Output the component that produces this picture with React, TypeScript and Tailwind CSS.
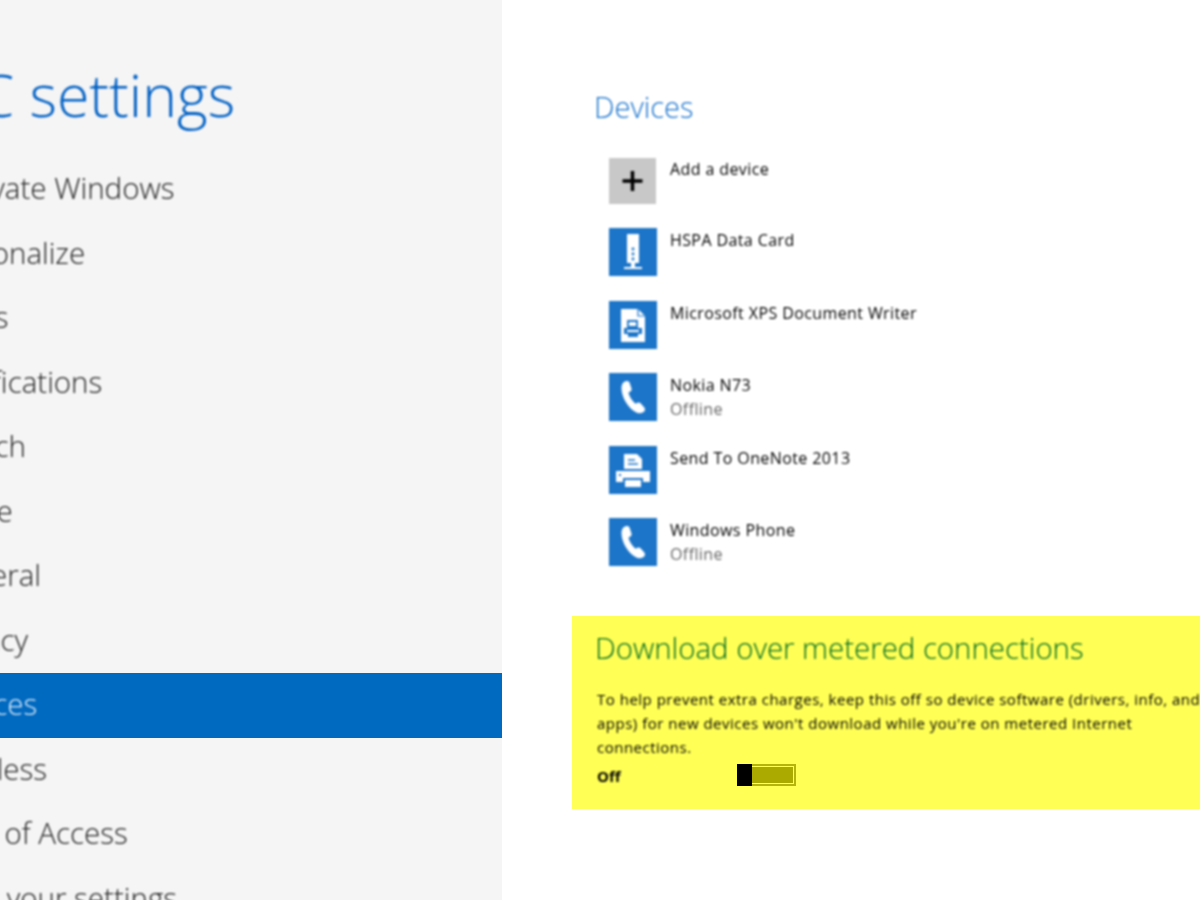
const font = { fontFamily: '"Open Sans", "Noto Sans", sans-serif' };

const nav = [
  { label: "Activate Windows", offset: "-ml-[57px]" },
  { label: "Personalize", offset: "-ml-[67px]" },
  { label: "Users", offset: "-ml-[68px]" },
  { label: "Notifications", offset: "-ml-[63px]" },
  { label: "Search", offset: "-ml-[65px]" },
  { label: "Share", offset: "-ml-[64px]" },
  { label: "General", offset: "-ml-[64px]" },
  { label: "Privacy", offset: "-ml-[64px]" },
  { label: "Devices", offset: "-ml-[64px]" },
  { label: "Wireless", offset: "-ml-[64px]" },
  { label: "Ease of Access", offset: "-ml-[65px]" },
  { label: "Sync your settings", offset: "-ml-[62px]" },
];

function Hspa() {
  return (
    <svg viewBox="0 0 48 48" className="h-12 w-12">
      <rect x="18" y="6" width="12" height="29" fill="#fff" />
      <circle cx="24" cy="21" r="1.4" fill="#1c75c8" />
      <circle cx="24" cy="26" r="1.4" fill="#1c75c8" />
      <circle cx="24" cy="31" r="1.4" fill="#1c75c8" />
      <rect x="22" y="35" width="4" height="4" fill="#fff" />
      <rect x="15" y="39" width="18" height="2" fill="#fff" />
    </svg>
  );
}

function Xps() {
  return (
    <svg viewBox="0 0 48 48" className="h-12 w-12">
      <path d="M12 8h17l7 7v26H12z" fill="#fff" />
      <path d="M29 8v7h7" fill="none" stroke="#1c75c8" strokeWidth="1.2" />
      <path d="M19 20h9v6h-9z" fill="none" stroke="#1c75c8" strokeWidth="1.8" />
      <path d="M15 27h18v6H15z" fill="#1c75c8" />
      <path d="M19 33h10v3H19z" fill="#1c75c8" />
      <path d="M18 29h12v2H18z" fill="#fff" />
    </svg>
  );
}

function Phone() {
  return (
    <svg viewBox="0 0 48 48" className="h-12 w-12">
      <path
        d="M15 9c2-1.500 4.500-1.500 5.500.5l2 6c.4 1.500-.3 2.500-1.600 3.300l-1.400 1c.8 3.500 3.500 8 7 11l2-1c1.300-.5 2.700-.2 3.500.9l3.500 4c1 1.500.5 3.300-1 4.300-2.500 1.700-5.500 1.700-8 0C19 35 13 25 12.500 16c-.2-3 .5-5.500 2.500-7z"
        fill="#fff"
      />
    </svg>
  );
}

function Printer() {
  return (
    <svg viewBox="0 0 48 48" className="h-12 w-12">
      <path d="M15 8h13l5 5v10H15z" fill="#fff" />
      <path d="M19 14h7M19 18h10" stroke="#1c75c8" strokeWidth="1.4" />
      <path d="M7 25h34v11h-7v-4H14v4H7z" fill="#fff" />
      <rect x="10" y="28" width="2" height="2" fill="#1c75c8" />
      <rect x="16" y="34" width="16" height="7" fill="#fff" />
    </svg>
  );
}

function Plus() {
  return (
    <svg viewBox="0 0 46 46" className="h-[46px] w-[47px]">
      <path d="M23 13v20M13 23h20" stroke="#000" strokeWidth="3.5" fill="none" />
    </svg>
  );
}

const devices = [
  { name: "Add a device", icon: <Plus />, first: true },
  { name: "HSPA Data Card", icon: <Hspa /> },
  { name: "Microsoft XPS Document Writer", icon: <Xps /> },
  { name: "Nokia N73", sub: "Offline", icon: <Phone /> },
  { name: "Send To OneNote 2013", icon: <Printer /> },
  { name: "Windows Phone", sub: "Offline", icon: <Phone /> },
];

export default function App() {
  return (
    <div className="flex h-[900px] w-[1200px] overflow-hidden bg-white" style={font}>
      <aside className="h-[900px] w-[502px] shrink-0 overflow-hidden bg-[#f5f5f5]">
        <h1 className="-ml-[57px] mt-[55px] h-[102px] whitespace-nowrap text-[59px] leading-[78px] font-light text-[#0060c4] blur-[0.8px]">
          PC settings
        </h1>
        <ul>
          {nav.map((item) => {
            const active = item.label === "Devices";
            return (
              <li
                key={item.label}
                className={`flex h-[64.5px] items-center whitespace-nowrap text-[29.5px] font-light ${
                  active ? "bg-[#0069c0] text-[#dcecfa]" : "text-[#222]"
                }`}
              >
                <span className={`${item.offset} -mt-[2px] blur-[0.8px]`}>{item.label}</span>
              </li>
            );
          })}
        </ul>
      </aside>
      <main className="min-w-0 flex-1">
        <h2 className="ml-[92px] mt-[87px] text-[29px] leading-[40px] font-light text-[#1470cc] blur-[0.8px]">
          Devices
        </h2>
        <ul className="mt-[28.5px] ml-[107px]">
          {devices.map((d) => (
            <li key={d.name} className="flex h-[72.6px] items-start gap-[13px]">
              {d.first ? (
                <div className="mt-[2px] h-[46px] w-[47px] shrink-0 bg-[#c8c8c8] blur-[0.8px]">{d.icon}</div>
              ) : (
                <div className="h-12 w-12 shrink-0 bg-[#1c75c8] blur-[0.8px]">{d.icon}</div>
              )}
              <div className={d.first ? "mt-px ml-px blur-[0.8px]" : "blur-[0.8px]"}>
                <div className="mt-[2px] text-[16px] leading-[21px] tracking-[0.4px] text-[#000]">{d.name}</div>
                {d.sub && (
                  <div className="mt-[3px] text-[16px] leading-[21px] tracking-[0.4px] text-[#666]">{d.sub}</div>
                )}
              </div>
            </li>
          ))}
        </ul>
        <section className="ml-[70px] mt-[25px] h-[193px] bg-[#ffff55] pl-[23px] pt-[12px]">
          <h3 className="whitespace-nowrap text-[29.4px] leading-[40px] font-light text-[#006a20] blur-[0.8px]">
            Download over metered connections
          </h3>
          <p className="mt-[19px] w-[620px] pl-[2px] text-[15px] leading-[24px] tracking-[0.5px] text-[#000] blur-[0.8px]">
            To help prevent extra charges, keep this off so device software (drivers, info, and
            <br />
            apps) for new devices won't download while you're on metered Internet
            <br />
            connections.
          </p>
          <div className="mt-[6px] flex items-center pl-[2px]">
            <span className="w-[140px] text-[15px] font-bold text-[#000] blur-[0.8px]">Off</span>
            <div className="-mt-[2px] flex h-[22px] w-[59px] border-2 border-[#b4b40c]">
              <div className="-my-[2px] -ml-[2px] w-[15px] bg-black" />
              <div className="my-px mr-px flex-1 bg-[#aaaa00]" />
            </div>
          </div>
        </section>
      </main>
    </div>
  );
}
